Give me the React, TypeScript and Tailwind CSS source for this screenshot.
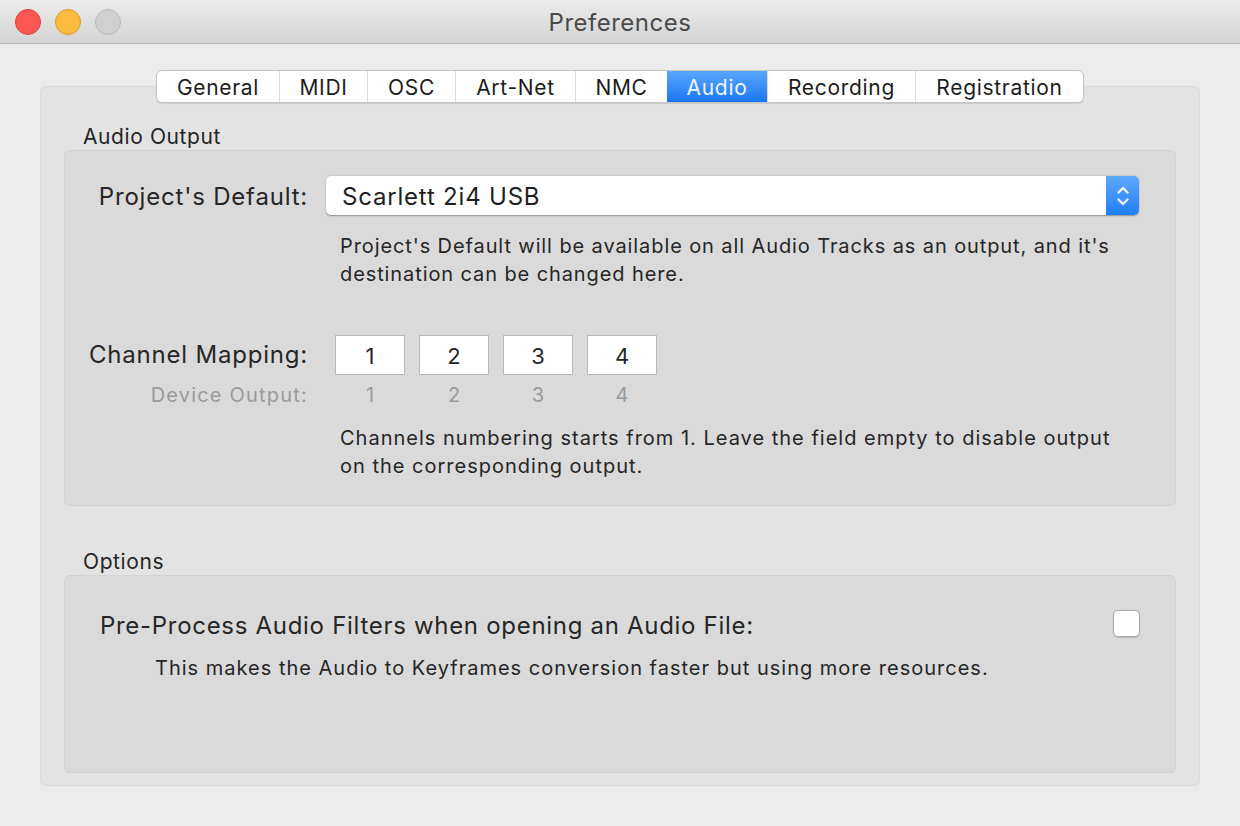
import React from 'react';

const FONT = { fontFamily: 'Inter, "Noto Sans", "Liberation Sans", sans-serif' };

const tabs: { label: string; width: number }[] = [
    { label: 'General', width: 122 },
    { label: 'MIDI', width: 88 },
    { label: 'OSC', width: 88 },
    { label: 'Art-Net', width: 120 },
    { label: 'NMC', width: 92 },
    { label: 'Audio', width: 100 },
    { label: 'Recording', width: 148 },
    { label: 'Registration', width: 168 },
];

const TrafficLights: React.FC = () => (
    <div className="absolute left-[15px] top-[9px] flex gap-[14px]">
        <span className="w-[26px] h-[26px] rounded-full bg-[#fc5753] border border-[#df3d39]" />
        <span className="w-[26px] h-[26px] rounded-full bg-[#fdbc40] border border-[#dd9d27]" />
        <span className="w-[26px] h-[26px] rounded-full bg-[#d0d0d0] border border-[#b9b9b9]" />
    </div>
);

const Stepper: React.FC = () => (
    <div className="w-[33px] h-full rounded-r-[5px] bg-gradient-to-b from-[#5ea8fc] to-[#1f7ef6] flex items-center justify-center">
        <svg width="16" height="28" viewBox="0 0 16 28" fill="none" stroke="white" strokeWidth="2.2" strokeLinecap="round" strokeLinejoin="round">
            <path d="M3.5 10.5l4.5-4.5 4.5 4.5" />
            <path d="M3.5 17.5l4.5 4.5 4.5-4.5" />
        </svg>
    </div>
);

export default function App() {
    return (
        <div style={FONT} className="w-[1240px] h-[826px] bg-[#ececec] overflow-hidden text-[#262626]">
            {/* title bar */}
            <div className="relative h-[44px] bg-gradient-to-b from-[#ebebeb] to-[#d4d4d4] border-b border-[#b8b8b8] flex items-center justify-center">
                <TrafficLights />
                <span className="pt-[2px] text-[24px] text-[#4a4a4a] tracking-[0.5px]">Preferences</span>
            </div>

            <div className="px-[40px] pt-[26px]">
                {/* tabs */}
                <div className="relative z-10 flex justify-center">
                    <div className="flex h-[33px] rounded-[6px] bg-white border border-[#c6c6c6] shadow-[0_1px_1px_rgba(0,0,0,0.12)] overflow-hidden">
                        {tabs.map((t, i) => (
                            <div
                                key={t.label}
                                style={{ width: t.width }}
                                className={`pt-[3px] flex items-center justify-center text-[21px] tracking-[0.7px] ${i > 0 ? 'border-l border-[#dcdcdc]' : ''} ${
                                    t.label === 'Audio'
                                        ? 'bg-gradient-to-b from-[#58a6fc] to-[#1777f4] text-[#eef5ff] border-l-0'
                                        : 'text-[#1c1c1c]'
                                }`}
                            >
                                {t.label}
                            </div>
                        ))}
                    </div>
                </div>

                {/* tab body */}
                <div className="-mt-[17px] h-[700px] rounded-[6px] bg-[#e3e3e3] border border-[#d9d9d9] px-[23px] pt-[38px] pb-[12px] flex flex-col">
                    <div className="pl-[19px] h-[24px] text-[21px] leading-[24px] tracking-[0.6px]">Audio Output</div>

                    <div className="mt-[1px] rounded-[6px] bg-[#dadada] border border-[#d2d2d2] pt-[25px] pb-[25px]">
                        <div className="flex items-center h-[39px]">
                            <div className="w-[243px] pt-[3px] text-right text-[24px] tracking-[0.8px]">Project's Default:</div>
                            <div className="ml-[18px] w-[813px] h-[39px] flex rounded-[5px] bg-white shadow-[0_0.5px_1.5px_rgba(0,0,0,0.35)]">
                                <div className="flex-1 pl-[16px] pt-[2px] flex items-center text-[24px] tracking-[0.8px] text-[#1f1f1f]">Scarlett 2i4 USB</div>
                                <Stepper />
                            </div>
                        </div>
                        <p className="mt-[17px] ml-[275px] w-[800px] text-[20px] leading-[28px] tracking-[0.9px]">
                            Project's Default will be available on all Audio Tracks as an output, and it's destination can be changed here.
                        </p>

                        <div className="mt-[47px] flex items-center h-[40px]">
                            <div className="w-[243px] text-right text-[24px] tracking-[0.8px]">Channel Mapping:</div>
                            <div className="ml-[27px] flex gap-[14px]">
                                {[1, 2, 3, 4].map((n) => (
                                    <div key={n} className="w-[70px] h-[40px] pt-[2px] bg-white border border-[#b9b9b9] flex items-center justify-center text-[22px]">
                                        {n}
                                    </div>
                                ))}
                            </div>
                        </div>
                        <div className="mt-[8px] flex items-center h-[24px] text-[20px] text-[#9b9b9b]">
                            <div className="w-[243px] text-right tracking-[1.2px]">Device Output:</div>
                            <div className="ml-[27px] flex gap-[14px]">
                                {[1, 2, 3, 4].map((n) => (
                                    <div key={n} className="w-[70px] text-center">{n}</div>
                                ))}
                            </div>
                        </div>
                        <p className="mt-[17px] ml-[275px] w-[800px] text-[20px] leading-[28px] tracking-[1px]">
                            Channels numbering starts from 1. Leave the field empty to disable output on the corresponding output.
                        </p>
                    </div>

                    <div className="mt-[44px] pl-[19px] h-[24px] text-[21px] leading-[24px] tracking-[0.6px]">Options</div>

                    <div className="mt-[1px] flex-1 rounded-[6px] bg-[#dadada] border border-[#d2d2d2] pt-[33px] pl-[35px] pr-[35px]">
                        <div className="flex items-center justify-between h-[30px]">
                            <span className="pt-[3px] text-[24px] tracking-[0.7px]">Pre-Process Audio Filters when opening an Audio File:</span>
                            <span className="-mt-[1px] w-[27px] h-[27px] rounded-[5px] bg-white border border-[#a9a9a9] shadow-[0_0.5px_1px_rgba(0,0,0,0.15)]" />
                        </div>
                        <p className="mt-[15px] ml-[55px] text-[20px] leading-[28px] tracking-[1px]">
                            This makes the Audio to Keyframes conversion faster but using more resources.
                        </p>
                    </div>
                </div>
            </div>
        </div>
    );
}
